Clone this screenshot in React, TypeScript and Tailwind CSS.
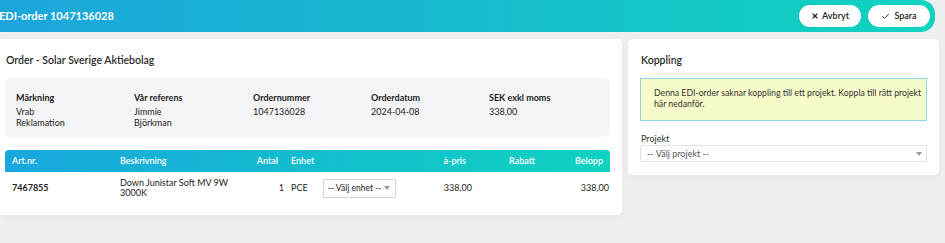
import React from "react";
import { X, Check } from "lucide-react";

function Caret() {
  return (
    <svg width="6" height="4" viewBox="0 0 6 4" className="shrink-0">
      <path d="M0 0 L6 0 L3 4 Z" fill="#9a9a9a" />
    </svg>
  );
}

export default function App() {
  return (
    <div className="w-[945px] h-[243px] overflow-hidden bg-[#eeeff3] font-['Lato',sans-serif] text-[#222]">
      {/* Header */}
      <header className="h-[32px] w-[935px] rounded-r-[14px] bg-[linear-gradient(90deg,#1ca5dc,#11d3bf)] flex items-center justify-between pr-[5px]">
        <h1 className="text-white font-bold text-[11px] -ml-[1px]">EDI-order 1047136028</h1>
        <div className="flex gap-[7px]">
          <button className="h-[22px] w-[62px] rounded-full bg-white flex items-center justify-center gap-[3px] text-[9px] font-semibold text-[#222]">
            <X size={8} strokeWidth={3.5} />
            Avbryt
          </button>
          <button className="h-[22px] w-[62px] rounded-full bg-white flex items-center justify-center gap-[4px] text-[9px] font-semibold text-[#222]">
            <Check size={9} strokeWidth={2.5} />
            Spara
          </button>
        </div>
      </header>

      <div className="flex items-start gap-[6px] mt-[7px]">
        {/* Left card */}
        <section className="w-[622px] h-[176px] bg-white rounded-r-[5px] shadow-[0_2px_10px_rgba(0,0,0,0.04)] pl-[5px] pr-[12px] pt-[14px]">
          <h2 className="pl-[1px] text-[10.5px] font-semibold leading-[14px] text-[#2a2a2a]">Order - Solar Sverige Aktiebolag</h2>

          <div className="mt-[11px] h-[59px] rounded-[5px] bg-[#f5f5f8] pl-[11px] pt-[14px] grid grid-cols-[118px_119px_118px_118px_118px] text-[9px]">
            <div>
              <div className="font-bold leading-[12px]">Märkning</div>
              <div className="mt-[2px] leading-[11px]">Vrab<br />Reklamation</div>
            </div>
            <div>
              <div className="font-bold leading-[12px]">Vår referens</div>
              <div className="mt-[2px] leading-[11px]">Jimmie<br />Björkman</div>
            </div>
            <div>
              <div className="font-bold leading-[12px]">Ordernummer</div>
              <div className="mt-[2px] leading-[11px]">1047136028</div>
            </div>
            <div>
              <div className="font-bold leading-[12px]">Orderdatum</div>
              <div className="mt-[2px] leading-[11px]">2024-04-08</div>
            </div>
            <div>
              <div className="font-bold leading-[12px]">SEK exkl moms</div>
              <div className="mt-[2px] leading-[11px]">338,00</div>
            </div>
          </div>

          {/* Table */}
          <div className="mt-[13px] text-[9px]">
            <div className="h-[22px] rounded-t-[4px] bg-[linear-gradient(90deg,#18a7de,#0fd2c0)] flex items-center text-white font-semibold">
              <div className="w-[108px] pl-[7px]">Art.nr.</div>
              <div className="w-[137px] pl-[7px]">Beskrivning</div>
              <div className="w-[36px] text-right pr-[8px]">Antal</div>
              <div className="w-[114px] pl-[5px]">Enhet</div>
              <div className="w-[75px] text-right pr-[9px]">à-pris</div>
              <div className="w-[68px] text-right pr-[8px]">Rabatt</div>
              <div className="w-[67px] text-right pr-[7px]">Belopp</div>
            </div>
            <div className="h-[32px] flex items-center">
              <div className="w-[108px] pl-[7px] font-bold">7467855</div>
              <div className="w-[137px] pl-[7px] leading-[10px]">
                <div className="w-[110px]">Down Junistar Soft MV 9W 3000K</div>
              </div>
              <div className="w-[36px] text-right pr-[2px]">1</div>
              <div className="w-[114px] pl-[5px] flex items-center">
                <span>PCE</span>
                <div className="ml-[15px] h-[19px] w-[73px] border border-[#d4d4d4] rounded-[1px] flex items-center justify-between pl-[4px] pr-[5px] whitespace-nowrap text-[8.5px]">
                  <span>-- Välj enhet --</span>
                  <Caret />
                </div>
              </div>
              <div className="w-[75px] text-right pr-[3px]">338,00</div>
              <div className="w-[68px]"></div>
              <div className="w-[67px] text-right pr-[1px]">338,00</div>
            </div>
          </div>
        </section>

        {/* Right card */}
        <section className="w-[311px] h-[136px] bg-white rounded-[5px] shadow-[0_2px_10px_rgba(0,0,0,0.04)] px-[12px] pt-[14px]">
          <h2 className="pl-[1px] text-[10.5px] font-semibold leading-[14px] text-[#2a2a2a]">Koppling</h2>
          <div className="mt-[11px] h-[43px] border border-[#93d3de] bg-[#f7fbca] pl-[13px] pr-[2px] pt-[9px] text-[8.7px] leading-[10.5px] text-[#333]">
            Denna EDI-order saknar koppling till ett projekt. Koppla till rätt projekt här nedanför.
          </div>
          <div className="mt-[12px] pl-[1px] text-[9px] leading-[12px] text-[#333]">Projekt</div>
          <div className="h-[17px] border border-[#e2e2e2] rounded-[1px] flex items-center justify-between pl-[6px] pr-[4px] text-[9px] text-[#555]">
            <span>-- Välj projekt --</span>
            <Caret />
          </div>
        </section>
      </div>
    </div>
  );
}
